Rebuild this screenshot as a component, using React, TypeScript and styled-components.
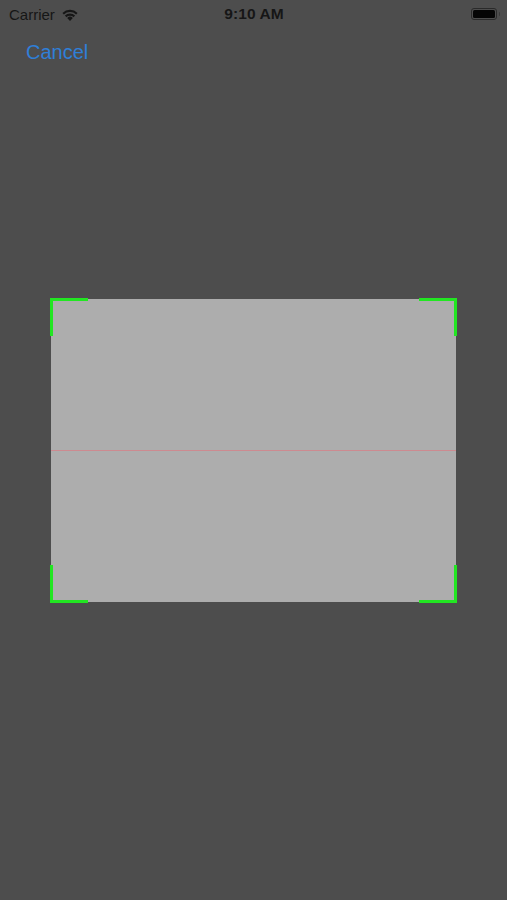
import React from "react";
import styled, { createGlobalStyle } from "styled-components";

const GlobalStyle = createGlobalStyle`
  html, body { margin: 0; padding: 0; background: #4d4d4d; }
  body { font-family: "Liberation Sans", Arial, sans-serif; }
  #root { min-height: 900px; }
`;

const Page = styled.div`
  width: 507px;
  height: 900px;
  background: #4d4d4d;
  display: flex;
  flex-direction: column;
  overflow: hidden;
`;

const StatusBar = styled.div`
  height: 28px;
  display: grid;
  grid-template-columns: 1fr auto 1fr;
  align-items: center;
  padding: 0 8px 0 9px;
  color: #161616;
`;

const Left = styled.div`
  display: flex;
  align-items: center;
  gap: 6px;
  font-size: 15px;
`;

const Time = styled.div`
  font-size: 15.5px;
  font-weight: 700;
  letter-spacing: 0.1px;
`;

const Right = styled.div`
  display: flex;
  justify-content: flex-end;
  align-items: center;
`;

const Battery = styled.div`
  position: relative;
  width: 22px;
  height: 8px;
  border: 1.5px solid #2a2a2a;
  border-radius: 3px;
  padding: 1px;
  box-sizing: content-box;
  margin-right: 2px;
`;

const BatteryFill = styled.div`
  width: 100%;
  height: 100%;
  background: #050505;
  border-radius: 1.5px;
`;

const BatteryNub = styled.div`
  position: absolute;
  right: -4px;
  top: 2.5px;
  width: 1.5px;
  height: 4px;
  background: #3a3a3a;
  border-radius: 0 1px 1px 0;
`;

const NavBar = styled.div`
  height: 50px;
  display: flex;
  align-items: center;
  padding-left: 26px;
`;

const CancelButton = styled.button`
  background: none;
  border: none;
  padding: 0;
  font-family: "Liberation Sans", Arial, sans-serif;
  font-size: 20px;
  color: #2f7fd8;
  margin-top: -2px;
  cursor: pointer;
`;

const Stage = styled.div`
  flex: 1;
  padding-top: 221px;
  padding-left: 51px;
`;

const Frame = styled.div`
  position: relative;
  width: 405px;
  height: 303px;
  background: #adadad;
  display: flex;
  align-items: center;
`;

const ScanLine = styled.div`
  width: 100%;
  height: 1px;
  background: #cd8a90;
`;

type CornerProps = { $v: "top" | "bottom"; $h: "left" | "right" };

const Corner = styled.div<CornerProps>`
  position: absolute;
  width: 38px;
  height: 38px;
  box-sizing: border-box;
  ${(p) => p.$v}: -1px;
  ${(p) => p.$h}: -1px;
  border-${(p) => p.$v}: 3px solid #22e622;
  border-${(p) => p.$h}: 3px solid #22e622;
`;

const Wifi = () => (
  <svg width="18" height="13" viewBox="0 0 18 13">
    <path d="M9 13 L6.2 9.9 A4 4 0 0 1 11.8 9.9 Z" fill="#161616" />
    <path d="M3.9 7.6 A7.3 7.3 0 0 1 14.1 7.6 L12.6 9.2 A5.2 5.2 0 0 0 5.4 9.2 Z" fill="#161616" />
    <path d="M1.4 4.9 A11 11 0 0 1 16.6 4.9 L15.1 6.5 A8.9 8.9 0 0 0 2.9 6.5 Z" fill="#161616" />
  </svg>
);

export default function App() {
  return (
    <>
      <GlobalStyle />
      <Page>
        <StatusBar>
          <Left>
            <span>Carrier</span>
            <Wifi />
          </Left>
          <Time>9:10 AM</Time>
          <Right>
            <Battery>
              <BatteryFill />
              <BatteryNub />
            </Battery>
          </Right>
        </StatusBar>
        <NavBar>
          <CancelButton>Cancel</CancelButton>
        </NavBar>
        <Stage>
          <Frame>
            <ScanLine />
            <Corner $v="top" $h="left" />
            <Corner $v="top" $h="right" />
            <Corner $v="bottom" $h="left" />
            <Corner $v="bottom" $h="right" />
          </Frame>
        </Stage>
      </Page>
    </>
  );
}
